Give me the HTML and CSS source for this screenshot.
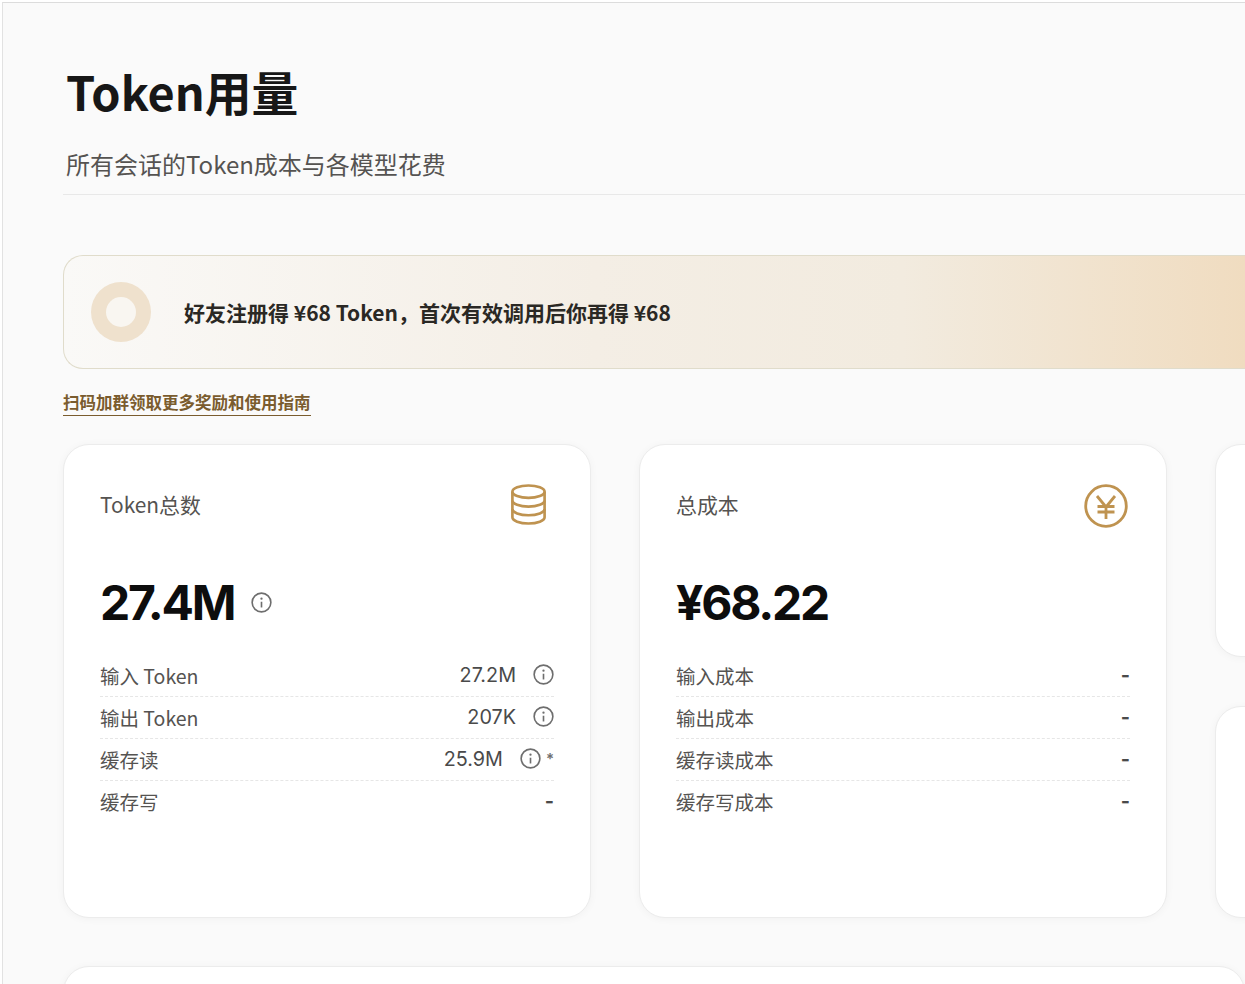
FILE: index.html
```html
<!DOCTYPE html>
<html lang="zh-CN">
<head>
    <meta charset="UTF-8">
    <title>Token用量</title>
    <link rel="stylesheet" href="styles.css">
</head>
<body>
    <main class="page">
        <header class="page-header">
            <h1 class="page-title">Token用量</h1>
            <p class="page-subtitle">所有会话的Token成本与各模型花费</p>
        </header>

        <section class="promo">
            <div class="promo-ring"><div class="promo-ring-hole"></div></div>
            <p class="promo-text">好友注册得 ¥68 Token，首次有效调用后你再得 ¥68</p>
        </section>
        <div class="guide"><a class="guide-link">扫码加群领取更多奖励和使用指南</a></div>

        <div class="stats">
            <section class="card card-tall">
                <div class="card-head">
                    <span class="card-label">Token总数</span>
                    <svg class="card-icon icon-db" viewBox="0 0 34 40" fill="none" stroke="#bf9350" stroke-width="2.6">
                        <ellipse cx="17" cy="7.5" rx="15.7" ry="6"/>
                        <path d="M1.3 7.5v25c0 3.3 7 6 15.7 6s15.7-2.7 15.7-6v-25"/>
                        <path d="M1.3 16c0 3.3 7 6 15.7 6s15.7-2.7 15.7-6"/>
                        <path d="M1.3 24.500c0 3.300 7 6 15.700 6s15.700-2.700 15.700-6"/>
                    </svg>
                </div>
                <div class="card-value">
                    <span class="big-number">27.4M</span>
                    <svg class="info info-big" viewBox="0 0 22 22"><use href="#info"/></svg>
                </div>
                <div class="rows">
                    <div class="row">
                        <span class="row-label">输入 Token</span>
                        <span class="row-value">27.2M<svg class="info" viewBox="0 0 22 22"><use href="#info"/></svg></span>
                    </div>
                    <div class="row">
                        <span class="row-label">输出 Token</span>
                        <span class="row-value">207K<svg class="info" viewBox="0 0 22 22"><use href="#info"/></svg></span>
                    </div>
                    <div class="row">
                        <span class="row-label">缓存读</span>
                        <span class="row-value row-value-star">25.9M<svg class="info" viewBox="0 0 22 22"><use href="#info"/></svg><span class="star">*</span></span>
                    </div>
                    <div class="row">
                        <span class="row-label">缓存写</span>
                        <span class="row-value row-dash">-</span>
                    </div>
                </div>
            </section>

            <section class="card card-tall">
                <div class="card-head">
                    <span class="card-label">总成本</span>
                    <svg class="card-icon icon-yen" viewBox="0 0 44 44" fill="none" stroke="#bf9350" stroke-width="2.8">
                        <circle cx="22" cy="22" r="20.300"/>
                        <path d="M13 12l9 11 9-11M13.500 22.500h17M13.500 28h17M22 23v12"/>
                    </svg>
                </div>
                <div class="card-value">
                    <span class="big-number">¥68.22</span>
                </div>
                <div class="rows">
                    <div class="row"><span class="row-label">输入成本</span><span class="row-value row-dash">-</span></div>
                    <div class="row"><span class="row-label">输出成本</span><span class="row-value row-dash">-</span></div>
                    <div class="row"><span class="row-label">缓存读成本</span><span class="row-value row-dash">-</span></div>
                    <div class="row"><span class="row-label">缓存写成本</span><span class="row-value row-dash">-</span></div>
                </div>
            </section>

            <div class="side-cards">
                <section class="card card-side"></section>
                <section class="card card-side"></section>
            </div>
        </div>

        <section class="card card-bottom"></section>
    </main>

    <svg class="defs" width="0" height="0">
        <symbol id="info" viewBox="0 0 22 22">
            <circle cx="11" cy="11" r="9.800" fill="none" stroke="#6e6e6e" stroke-width="1.700"/>
            <circle cx="11" cy="7" r="1.200" fill="#6e6e6e"/>
            <path d="M11 10.200v6" stroke="#6e6e6e" stroke-width="1.700" fill="none"/>
        </symbol>
    </svg>
</body>
</html>
```

FILE: styles.css
```css
html, body {
    margin: 0;
    height: 100%;
    overflow: hidden;
}
body {
    background-color: #fff;
    padding-top: 2px;
    box-sizing: border-box;
    font-family: 'Noto Sans CJK SC', 'Noto Sans', sans-serif;
}
.page {
    width: 1400px;
    height: 982px;
    margin-left: 2px;
    box-sizing: border-box;
    border-top: 1px solid #dcdcdc;
    border-left: 1px solid #e2e2e2;
    background-color: #fafafa;
    padding: 0 0 0 60px;
    overflow: hidden;
}
.page-header {
    padding-top: 53px;
    height: 138px;
    border-bottom: 1px solid #e8e8e8;
}
.page-title {
    margin: 0 0 0 3px;
    font-size: 46.800px;
    font-weight: 700;
    line-height: 70px;
    color: #171717;
}
.page-subtitle {
    margin: 21px 0 0 3px;
    font-size: 24px;
    line-height: 34px;
    color: #555351;
}
.promo {
    margin-top: 60px;
    height: 114px;
    box-sizing: border-box;
    display: flex;
    align-items: center;
    gap: 33px;
    padding-left: 27px;
    border: 1px solid #e0dccb;
    border-right: none;
    border-radius: 20px 0 0 20px;
    background: linear-gradient(90deg, #faf9f7 0%, #f4eee5 45%, #f2ebdf 71%, #f0dcc0 100%);
    width: 1182px;
}
.promo-ring {
    width: 60px;
    height: 60px;
    border-radius: 50%;
    background-color: #efe1cd;
    display: flex;
    align-items: center;
    justify-content: center;
}
.promo-ring-hole {
    width: 30px;
    height: 30px;
    border-radius: 50%;
    background-color: #f9f6f1;
}
.promo-text {
    margin: 0;
    font-size: 21px;
    font-weight: 700;
    color: #2a2824;
}
.guide {
    margin-top: 21px;
    height: 26px;
}
.guide-link {
    display: inline-block;
    font-size: 16.500px;
    font-weight: 700;
    line-height: 25px;
    color: #7a5c2e;
    border-bottom: 1px solid #7a5c2e;
}
.stats {
    margin-top: 28px;
    display: flex;
    gap: 48px;
    height: 474px;
}
.card {
    background-color: #fff;
    border: 1px solid #ececec;
    border-radius: 26px;
    box-sizing: border-box;
    box-shadow: 0 1px 8px rgba(0, 0, 0, 0.04);
    flex: none;
}
.card-tall {
    width: 528px;
    padding: 36px 36px 0;
}
.side-cards {
    flex: none;
    display: flex;
    flex-direction: column;
    justify-content: space-between;
}
.card-side {
    width: 300px;
    height: 212.500px;
}
.card-bottom {
    margin-top: 48px;
    width: 1182px;
    height: 100px;
}
.card-head {
    display: flex;
    justify-content: space-between;
    height: 50px;
}
.card-label {
    font-size: 20.900px;
    line-height: 46px;
    color: #555351;
}
.card-icon {
    display: block;
    margin-top: 3px;
}
.icon-db {
    width: 35px;
    height: 41px;
    margin-right: 8px;
}
.icon-yen {
    width: 44px;
    height: 44px;
    margin-right: 2px;
}
.card-value {
    margin-top: 37px;
    height: 68px;
    display: flex;
    align-items: center;
    gap: 17px;
}
.big-number {
    font-family: 'Inter', 'Noto Sans', sans-serif;
    font-size: 48px;
    font-weight: 700;
    letter-spacing: -2.200px;
    color: #0d0d0d;
}
.rows {
    margin-top: 19px;
}
.row {
    display: flex;
    justify-content: space-between;
    align-items: center;
    height: 42px;
    box-sizing: border-box;
    border-bottom: 1px dashed #e6e6e6;
}
.row:last-child {
    border-bottom-color: transparent;
}
.row-label {
    font-size: 19.500px;
    color: #555351;
}
.row-value {
    display: flex;
    align-items: center;
    gap: 17px;
    margin-bottom: 2px;
    font-family: 'Inter', 'Noto Sans', sans-serif;
    font-size: 19.800px;
    color: #4a4a4a;
}
.row-dash {
    font-weight: 700;
}
.row-value-star .star {
    margin-left: -12px;
    font-size: 15px;
    font-weight: 600;
    color: #6e6e6e;
}
.info {
    display: block;
    width: 21px;
    height: 21px;
}
.info-big {
    width: 21px;
    height: 21px;
}
.defs {
    position: absolute;
}
```
